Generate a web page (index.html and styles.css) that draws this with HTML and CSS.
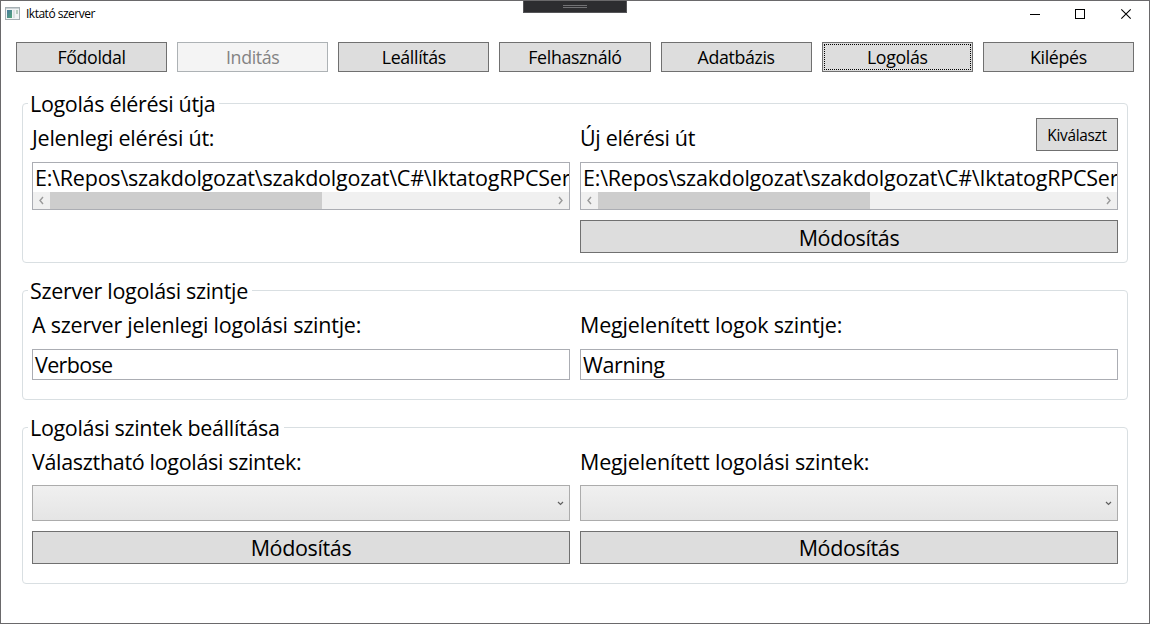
FILE: index.html
```html
<!DOCTYPE html>
<html lang="hu">
<head>
<meta charset="utf-8">
<title>Iktató szerver</title>
<link rel="stylesheet" href="styles.css">
</head>
<body>
<div class="window">
  <header class="titlebar">
    <svg class="app-icon" width="15" height="13" viewBox="0 0 15 13">
      <rect x=".5" y=".5" width="14" height="12" fill="#f1f4f5" stroke="#a5afb3"/>
      <rect x="1" y="1" width="13" height="1" fill="#c9d0d3"/>
      <defs><linearGradient id="pane" x1="0" y1="0" x2="1" y2="1"><stop offset="0" stop-color="#4779a0"/><stop offset="1" stop-color="#52a578"/></linearGradient></defs>
      <rect x="2" y="3" width="5" height="8" fill="url(#pane)"/>
      <rect x="8" y="3" width="2" height="8" fill="#dce1e3"/>
      <rect x="11" y="3" width="2" height="4" fill="#b5cdbf"/>
    </svg>
    <h1 class="title">Iktató szerver</h1>
    <svg class="window-buttons" width="102" height="12" viewBox="0 0 102 12" fill="none" stroke="#000">
      <path d="M0 6.5h10"/>
      <rect x="45.5" y="1.5" width="9" height="9"/>
      <path d="M91.3 1.3l9.4 9.4M100.7 1.3l-9.4 9.4" stroke-width="1.1"/>
    </svg>
  </header>
  <div class="debug-bar"><span class="grip"></span></div>

  <nav class="nav">
    <button class="btn">Fődoldal</button>
    <button class="btn" disabled>Inditás</button>
    <button class="btn">Leállítás</button>
    <button class="btn">Felhasználó</button>
    <button class="btn">Adatbázis</button>
    <button class="btn focused">Logolás</button>
    <button class="btn">Kilépés</button>
  </nav>

  <main class="groups">
    <section class="group group-path">
      <h2 class="legend">Logolás élérési útja</h2>
      <div class="column">
        <div class="label-row"><span class="label">Jelenlegi elérési út:</span></div>
        <div class="pathbox">
          <div class="path-text">E:\Repos\szakdolgozat\szakdolgozat\C#\IktatogRPCServer</div>
          <div class="scrollbar">
            <svg class="arrow" width="17" height="17" viewBox="0 0 17 17"><path d="M10 5L7 8.5L10 12"/></svg>
            <div class="track"><div class="thumb"></div></div>
            <svg class="arrow" width="17" height="17" viewBox="0 0 17 17"><path d="M7 5L10 8.5L7 12"/></svg>
          </div>
        </div>
      </div>
      <div class="column">
        <div class="label-row"><span class="label tight">Új elérési út</span><button class="btn choose">Kiválaszt</button></div>
        <div class="pathbox">
          <div class="path-text">E:\Repos\szakdolgozat\szakdolgozat\C#\IktatogRPCServer</div>
          <div class="scrollbar">
            <svg class="arrow" width="17" height="17" viewBox="0 0 17 17"><path d="M10 5L7 8.5L10 12"/></svg>
            <div class="track"><div class="thumb"></div></div>
            <svg class="arrow" width="17" height="17" viewBox="0 0 17 17"><path d="M7 5L10 8.5L7 12"/></svg>
          </div>
        </div>
        <button class="btn modify">Módosítás</button>
      </div>
    </section>

    <section class="group group-level">
      <h2 class="legend">Szerver logolási szintje</h2>
      <div class="column">
        <div class="label-row"><span class="label">A szerver jelenlegi logolási szintje:</span></div>
        <div class="textbox current">Verbose</div>
      </div>
      <div class="column">
        <div class="label-row"><span class="label wide">Megjelenített logok szintje:</span></div>
        <div class="textbox">Warning</div>
      </div>
    </section>

    <section class="group group-settings">
      <h2 class="legend">Logolási szintek beállítása</h2>
      <div class="column">
        <div class="label-row"><span class="label tight">Választható logolási szintek:</span></div>
        <div class="combo"><svg width="7" height="5" viewBox="0 0 7 5"><path d="M1 1L3.5 3.5L6 1"/></svg></div>
        <button class="btn modify">Módosítás</button>
      </div>
      <div class="column">
        <div class="label-row"><span class="label wide">Megjelenített logolási szintek:</span></div>
        <div class="combo"><svg width="7" height="5" viewBox="0 0 7 5"><path d="M1 1L3.5 3.5L6 1"/></svg></div>
        <button class="btn modify">Módosítás</button>
      </div>
    </section>
  </main>
</div>
</body>
</html>
```
FILE: styles.css
```css
* { box-sizing: border-box; }

body {
  margin: 0;
  background: #fff;
  color: #000;
  font-family: "Open Sans", "Noto Sans", sans-serif;
  font-size: 21.5px;
  line-height: 30px;
}

.window {
  position: relative;
  width: 1150px;
  height: 624px;
  border: 1px solid #6a696b;
  overflow: hidden;
}

.titlebar {
  display: flex;
  align-items: center;
  height: 25px;
  padding: 0 17px 0 4px;
}

.title {
  margin: 0 auto 0 6px;
  font-size: 12px;
  font-weight: 400;
  line-height: 16px;
  letter-spacing: -0.5px;
}

.debug-bar {
  position: absolute;
  top: -1px;
  left: 522px;
  display: flex;
  justify-content: center;
  width: 104px;
  height: 13px;
  padding-top: 5px;
  background: #2d2d30;
  border: 1px solid #555558;
}

.grip {
  width: 24px;
  height: 3px;
  margin-top: -1px;
  border: solid #727275;
  border-width: 1px 0;
}

.nav {
  display: grid;
  grid-template-columns: repeat(7, 1fr);
  gap: 10px;
  padding: 16px 15px 0;
}

.btn {
  height: 30px;
  padding: 0;
  background: #ddd;
  border: 1px solid #707070;
  border-radius: 0;
  color: #000;
  font: 17.8px/28px "Open Sans", "Noto Sans", sans-serif;
  letter-spacing: -0.35px;
}

.btn:disabled {
  background: #f4f4f4;
  border-color: #adb2b5;
  color: #838383;
}

.focused {
  outline: 1px dotted #000;
  outline-offset: -3px;
}

.groups {
  display: flex;
  flex-direction: column;
  gap: 27px;
  padding: 31px 21px 0;
}

.group {
  position: relative;
  display: grid;
  grid-template-columns: 1fr 1fr;
  gap: 10px;
  padding: 0 9px;
  border: 1px solid #d9dfe2;
  border-radius: 4px;
}

.group-path { height: 160px; }
.group-level { height: 110px; }
.group-settings { height: 157px; }
.group-settings .label-row { height: 57px; }

.legend {
  position: absolute;
  top: -15px;
  left: 5px;
  margin: 0;
  padding: 0 4px 0 2px;
  background: #fff;
  font-size: inherit;
  font-weight: 400;
  letter-spacing: -0.32px;
}

.column {
  display: flex;
  flex-direction: column;
  min-width: 0;
}

.label-row {
  display: flex;
  justify-content: space-between;
  height: 58px;
}

.label {
  margin-top: 19px;
  letter-spacing: -0.22px;
}

.label.tight { letter-spacing: -0.32px; }
.label.wide { letter-spacing: -0.17px; }

.choose {
  width: 82px;
  height: 33px;
  margin-top: 14px;
  padding-top: 2px;
  font-size: 15.4px;
  letter-spacing: -0.3px;
}

.pathbox {
  height: 48px;
  border: 1px solid #abadb3;
}

.path-text {
  height: 29px;
  padding-left: 2px;
  overflow: hidden;
  white-space: nowrap;
  letter-spacing: -0.22px;
}

.scrollbar {
  display: flex;
  height: 17px;
  background: #f0f0f0;
}

.arrow path {
  fill: none;
  stroke: #999;
  stroke-width: 1.4;
}

.track { flex: 1; }

.thumb {
  width: 272px;
  height: 17px;
  background: #cdcdcd;
}

.textbox {
  height: 31px;
  padding-left: 2px;
  border: 1px solid #abadb3;
  letter-spacing: -0.35px;
}

.textbox.current { letter-spacing: -0.65px; }

.combo {
  display: flex;
  align-items: center;
  justify-content: flex-end;
  height: 36px;
  padding-right: 5px;
  border: 1px solid #acacac;
  background: linear-gradient(#f0f0f0, #e5e5e5);
}

.combo path {
  fill: none;
  stroke: #606060;
  stroke-width: 1.2;
}

.modify {
  height: 33px;
  margin-top: 10px;
  font-size: 21.5px;
  line-height: 31px;
}

.group-path .modify { padding-top: 1px; }
```
